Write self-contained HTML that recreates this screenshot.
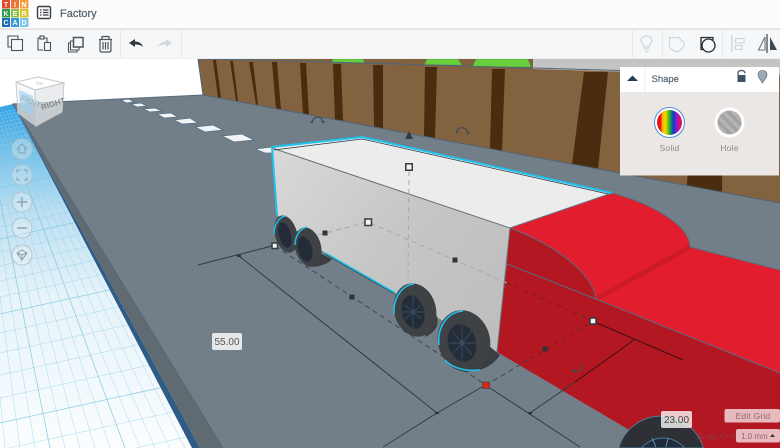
<!DOCTYPE html>
<html lang="en">
<head>
<meta charset="utf-8">
<title>Factory</title>
<style>
html,body{margin:0;padding:0;background:#fff;width:780px;height:448px;overflow:hidden}
#a{position:relative;width:780px;height:448px;overflow:hidden;font-family:"Liberation Sans",sans-serif}
svg{position:absolute;left:0;top:0;display:block;filter:blur(.3px)}
</style>
</head>
<body>
<div id="a">
<svg width="780" height="448" viewBox="0 0 780 448" xmlns="http://www.w3.org/2000/svg">
<defs>
<linearGradient id="gb" x1="0" y1="104" x2="0" y2="448" gradientUnits="userSpaceOnUse">
<stop offset="0" stop-color="#2b9fe6"/><stop offset=".12" stop-color="#6dbde9"/><stop offset=".3" stop-color="#b9def1"/><stop offset=".55" stop-color="#e6f3f9"/><stop offset="1" stop-color="#fbfdfe"/>
</linearGradient>
<clipPath id="wp"><polygon points="0,107 13,104 192,448 0,448"/></clipPath>
<linearGradient id="gs" x1="272" y1="148" x2="510" y2="340" gradientUnits="userSpaceOnUse">
<stop offset="0" stop-color="#d9d9d9"/><stop offset=".5" stop-color="#c6c6c6"/><stop offset="1" stop-color="#bdbdbd"/>
</linearGradient>
<linearGradient id="rb" x1="0" y1="0" x2="1" y2="0">
<stop offset="0" stop-color="#e8141c"/><stop offset=".17" stop-color="#e8141c"/><stop offset=".17" stop-color="#f5a100"/><stop offset=".34" stop-color="#f5d800"/><stop offset=".5" stop-color="#25b52b"/><stop offset=".66" stop-color="#0a3dc8"/><stop offset=".82" stop-color="#b510c8"/><stop offset="1" stop-color="#e8141c"/>
</linearGradient>
<pattern id="hs" width="7" height="7" patternUnits="userSpaceOnUse" patternTransform="rotate(-45)">
<rect width="7" height="7" fill="#b5b5b5"/><rect width="3.5" height="7" fill="#a2a2a2"/>
</pattern>
</defs>

<!-- workplane -->
<polygon points="0,107 13,104 200,448 0,448" fill="url(#gb)"/>
<g clip-path="url(#wp)" fill="none">
<path stroke="#8fd0ea" stroke-width=".5" opacity=".75" d="M-38 10L185 448M-38 10L170 448M-38 10L155 448M-38 10L140 448M-38 10L110 448M-38 10L95 448M-38 10L80 448M-38 10L65 448M-38 10L35 448M-38 10L20 448M-38 10L5 448M-38 10L-10 448M0 113L200 69M0 116L200 72M0 119L200 75M0 123L200 79M0 131L200 87M0 136L200 92M0 141L200 97M0 146L200 102M0 158L200 114M0 165L200 121M0 172L200 128M0 180L200 136M0 197L200 153M0 206L200 162M0 216L200 172M0 227L200 183M0 252L200 208M0 266L200 222M0 281L200 237M0 297L200 253M0 333L200 289M0 353L200 309M0 375L200 331M0 398L200 354M9 448L200 406M136 448L200 434"/>
<path stroke="#7ec6e2" stroke-width=".8" opacity=".85" d="M-38 10L125 448M-38 10L50 448M-38 10L200 448M0 127L200 83M0 152L200 108M0 188L200 144M0 239L200 195M0 314L200 270M0 423L200 379"/>
</g>
<polygon points="13,104 200,448 192,448" fill="#2f5b87"/>
<polygon points="13,104 223,448 200,448" fill="#5f6b71"/>
<polygon points="13,104 203,95 780,203 780,448 223,448" fill="#727f89"/>
<path d="M223 448L13 104L203 95" fill="none" stroke="#566a7c" stroke-width="1"/>

<!-- back wall -->
<polygon points="533,59 780,59 780,76 533,69" fill="#c4c4c4"/>
<polygon points="198,59 533,59 533,69 780,76 780,203 203,95" fill="#836240"/>
<g fill="#4a2c0e">
<polygon points="213,60 216,60 221,98 218,98"/>
<polygon points="230,61 233,61 238,101 236,101"/>
<polygon points="249,62 253,62 258,105 256,105"/>
<polygon points="272,62 277,62 281,110 276,109"/>
<polygon points="300,63 306,63 309,115 303,114"/>
<polygon points="333,64 341,64 343,121 335,120"/>
<polygon points="373,65 383,65 383,129 374,127"/>
<polygon points="425,67 437,67 435,138 424,136"/>
<polygon points="492,69 505,69 502,151 490,149"/>
<polygon points="584,72 608,72 598,169 572,164"/>
<polygon points="693,74 724,74 722,192 687,186"/>
</g>
<g fill="#68d03a" stroke="#4a8a50" stroke-width=".5">
<polygon points="333,59 363,59 365,63 331,63"/>
<polygon points="427,59 458,59 462,65 424,65"/>
<polygon points="476,59 528,59 531,67 472,67"/>
</g>
<path d="M198 59L203 95L780 203M198 59L258 60L533 68L780 75" fill="none" stroke="#4f657a" stroke-width="1"/>

<!-- road dashes -->
<g fill="#f2f4f5" stroke="#566f86" stroke-width=".8">
<polygon points="121,100 129,99 134,102 126,103"/>
<polygon points="131,104 141,103 147,106 137,107"/>
<polygon points="143,109 155,108 162,111 150,112"/>
<polygon points="157,114 171,113 178,117 164,118"/>
<polygon points="174,120 190,118 198,123 182,124"/>
<polygon points="195,127 213,125 223,130 205,132"/>
<polygon points="222,136 242,134 254,140 234,142"/>
<polygon points="255,149 272,147 280,153 265,153"/>
</g>

<!-- red cab -->
<polygon points="507,264 596,299 780,373 780,448 660,448 497,352" fill="#b31722"/>
<path d="M510 228L612 193C650 203 690 225 690 247L780 270L780 373L596 299Z" fill="#e21d2e"/>
<path d="M596 299L690 247" stroke="#c81a28" stroke-width="5" fill="none" opacity=".8"/>
<path d="M510 228C550 243 592 270 596 299L507 264Z" fill="#b31722"/>
<path d="M510 228C550 243 592 270 596 299M507 264L596 299L780 373M612 193C650 203 690 225 690 247L780 270" fill="none" stroke="#5b6e80" stroke-width="1"/>

<!-- trailer -->
<polygon points="272,148 510,228 497,352 393,292 325,253 277,215" fill="url(#gs)"/>
<polygon points="272,148 362,137 612,193 510,228" fill="#ececec"/>
<path d="M272 148L510 228L612 193M510 228L497 352" fill="none" stroke="#66727c" stroke-width="1"/>
<path d="M277 215L272 147L362 137L612 193" fill="none" stroke="#1fc3ee" stroke-width="2"/>
<path d="M274 150L362 139L608 194" fill="none" stroke="#26323c" stroke-width=".7"/>
<path d="M325 253L395 293" fill="none" stroke="#1fc3ee" stroke-width="2"/>
<path d="M325 254L395 294" fill="none" stroke="#26323c" stroke-width=".6"/>

<!-- dims & dashes -->
<g fill="none" stroke="#333a40" stroke-width="1">
<path d="M198 265L272 246M239 256L437 413M383 447L437 413L482 387M490 388L580 447"/>
</g>
<path d="M575 382L634 340M597 323L683 360" fill="none" stroke="#3a1015" stroke-width="1"/>
<path d="M530 413L575 382" fill="none" stroke="#333a40" stroke-width="1"/>
<g fill="none" stroke-width="1" stroke-dasharray="5 4">
<path d="M275 246L486 385L528 360" stroke="#3f474d"/>
<path d="M409 171L408 280M275 246L368 222L507 283" stroke="#a8a8a8"/>
<path d="M507 283L593 321L528 360" stroke="#7d1c22"/>
</g>

<!-- wheels -->
<g>
<ellipse cx="286" cy="234" rx="11" ry="19" transform="rotate(-15 286 234)" fill="#3e4245"/>
<ellipse cx="285" cy="235" rx="6" ry="13" transform="rotate(-15 285 235)" fill="#232c38"/>
<path d="M274 234C274 224 280 216 286 216" fill="none" stroke="#1fc3ee" stroke-width="1.4"/>
<path d="M314 254L322 254L332 259C326 266 314 268 306 266Z" fill="#3a3e42"/>
<ellipse cx="308" cy="247" rx="13" ry="20" transform="rotate(-15 308 247)" fill="#3e4245"/>
<ellipse cx="305" cy="249" rx="7" ry="13" transform="rotate(-15 305 249)" fill="#232c38"/>
<path d="M295 245C295 235 301 228 307 227" fill="none" stroke="#1fc3ee" stroke-width="1.4"/>

<path d="M428 318L437 316C439 325 436 332 425 337Z" fill="#3a3e42"/>
<ellipse cx="415" cy="310" rx="21" ry="27" transform="rotate(-15 415 310)" fill="#3e4245"/>
<ellipse cx="413" cy="312" rx="11" ry="17" transform="rotate(-15 413 312)" fill="#232c38"/>
<path d="M413 296L413 328M405 305L421 319M405 319L421 305M402 312L424 312" stroke="#3a4c60" stroke-width=".9"/>
<circle cx="413" cy="312" r="2" fill="#3a4c60"/>
<path d="M394 314C393 298 402 285 414 284" fill="none" stroke="#1fc3ee" stroke-width="1.6"/>

<path d="M480 345L489 346L500 355C494 364 484 371 470 371Z" fill="#3a3e42"/>
<ellipse cx="464" cy="341" rx="26" ry="31" transform="rotate(-15 464 341)" fill="#3e4245"/>
<ellipse cx="462" cy="343" rx="14" ry="19" transform="rotate(-15 462 343)" fill="#232c38"/>
<path d="M462 325L462 361M452 331L472 355M452 355L472 331M449 343L476 343" stroke="#3a4c60" stroke-width=".9"/>
<circle cx="462" cy="343" r="2.500" fill="#3a4c60"/>
<path d="M439 345C437 326 448 312 463 311M445 360C450 366 462 372 480 370" fill="none" stroke="#1fc3ee" stroke-width="1.6"/>

<path d="M618.700 448A44 44 0 0 1 703.300 448Z" fill="#2d3135" stroke="#4e7a9a" stroke-width="1"/>
<path d="M641.600 448A28 28 0 0 1 684.400 448Z" fill="#1f2b3a" stroke="#4e7a9a" stroke-width="1"/>
<path d="M652 438L656 447M668 438L666 447" stroke="#5a8cb0" stroke-width="1"/>
</g>

<!-- arcs / grabbers -->
<g fill="none" stroke="#454b52" stroke-width="1.2">
<path d="M312 122C313 116 322 115 323 122"/>
<path d="M457 132C457 126 467 126 468 133"/>
<path d="M573 371C579 373 584 369 581 364"/>
</g>
<g fill="#454b52">
<polygon points="310,121 314,121 312,124"/><polygon points="321,121 325,121 323,124"/>
<polygon points="455,131 459,131 457,134"/><polygon points="466,132 470,132 468,135"/>
<polygon points="572,369 576,370 573,373"/>
<polygon points="409,131 413,139 405,139" fill="#33393f"/>
</g>
<g fill="#2f3437">
<rect x="322.500" y="230.500" width="5" height="5"/>
<rect x="452.500" y="257.500" width="5" height="5"/>
<rect x="349.500" y="294.500" width="5" height="5"/>
<rect x="542.500" y="346.500" width="5" height="5"/>
<rect x="237" y="255" width="4" height="2"/><rect x="435" y="412" width="4" height="2"/><rect x="528" y="412" width="4" height="2"/>
</g>
<g fill="#f4f4f4" stroke="#33393f" stroke-width="1.5">
<rect x="405.750" y="163.750" width="6.500" height="6.500"/>
<rect x="365" y="219" width="6.500" height="6.500"/>
<rect x="272" y="243" width="5.500" height="5.500"/>
<rect x="590" y="318" width="6" height="6"/>
</g>
<rect x="482.500" y="382" width="7" height="6.500" fill="#e8200c" stroke="#4a4f52" stroke-width="1"/>

<!-- view cube -->
<g stroke="#c4c9cc" stroke-width="1">
<polygon points="16,82 38,77 64,83 35,90" fill="#fff" fill-opacity=".9"/>
<polygon points="16,82 35,90 36,126 18,113" fill="#f0f3f5" fill-opacity=".6"/>
<polygon points="64,83 35,90 36,126 62,112" fill="#e3e5e7" fill-opacity=".75"/>
</g>
<polygon points="19,90 33,96 33,116 20,109" fill="#9fd2ee" opacity=".7"/>
<text font-size="8" font-weight="bold" fill="#a3b4c0" transform="translate(20 100) rotate(22)">FRNT</text>
<text font-size="8" font-weight="bold" fill="#80888e" transform="translate(42 110) rotate(-17)">RIGHT</text>
<text font-size="4" fill="#b3b9bd" transform="translate(35 84) rotate(12)">TOP</text>

<!-- nav -->
<g fill="#fff" fill-opacity=".28" stroke="#b7c4ca" stroke-width="1">
<circle cx="22" cy="149" r="10"/><circle cx="22" cy="175" r="10"/><circle cx="22" cy="202" r="10"/><circle cx="22" cy="228" r="10"/><circle cx="22" cy="255" r="10"/>
</g>
<g fill="none" stroke="#8f9ba2" stroke-width="1">
<path d="M17 149L22 144L27 149M19 148V153H25V148"/>
<path d="M17 173V170H20M24 170H27V173M27 177V180H24M20 180H17V177"/>
<path d="M17 202H27M22 197V207" stroke-width="1.3"/>
<path d="M17 228H27" stroke-width="1.3"/>
<path d="M22 250L27 253L22 260L17 253ZM17 253L22 255L27 253M22 255V260"/>
</g>

<!-- header -->
<rect x="0" y="0" width="780" height="28" fill="#fcfcfc"/>
<rect x="0" y="28" width="780" height="2" fill="#e3e5e8"/>
<rect x="0" y="30" width="780" height="29" fill="#f6f7f8"/>
<rect x="0" y="58" width="780" height="1" fill="#eceef0"/>
<g font-size="7" font-weight="bold" fill="#fff" text-anchor="middle">
<rect x="2" y="0" width="8" height="8.500" fill="#e2492f"/><text x="6" y="7">T</text>
<rect x="11" y="0" width="8" height="8.500" fill="#eb7433"/><text x="15" y="7">I</text>
<rect x="20" y="0" width="8.500" height="8.500" fill="#f0a03f"/><text x="24" y="7">N</text>
<rect x="2" y="9" width="8" height="8.500" fill="#2e9a4b"/><text x="6" y="16">K</text>
<rect x="11" y="9" width="8" height="8.500" fill="#8fc03e"/><text x="15" y="16">E</text>
<rect x="20" y="9" width="8.500" height="8.500" fill="#d9c52b"/><text x="24" y="16">R</text>
<rect x="2" y="18" width="8" height="9" fill="#1c6cb5"/><text x="6" y="25">C</text>
<rect x="11" y="18" width="8" height="9" fill="#3b98d6"/><text x="15" y="25">A</text>
<rect x="20" y="18" width="8.500" height="9" fill="#7cc4ee"/><text x="24" y="25">D</text>
</g>
<rect x="37.500" y="6.500" width="13" height="12" rx="1.500" fill="none" stroke="#3b4046" stroke-width="1.4"/>
<path d="M40 10H41.500M43 10H48.500M40 12.500H41.500M43 12.500H48.500M40 15H41.500M43 15H48.500" stroke="#3b4046" stroke-width="1.2"/>
<text x="60" y="17" font-size="11" fill="#56656f" stroke="#56656f" stroke-width=".25">Factory</text>

<!-- toolbar separators -->
<path d="M120.500 30V58M181.500 30V58M632.500 30V58M662.500 30V58M722.500 30V58" stroke="#e6e8ea"/>

<!-- toolbar left -->
<g fill="none" stroke="#4a545c" stroke-width="1.1">
<path d="M11 47H8V36H18V39"/><rect x="11.500" y="39.500" width="11" height="11"/>
<path d="M44 38H47V42M43 50H38V38H40"/><rect x="40" y="36" width="4" height="3"/><rect x="44.500" y="42.500" width="6" height="8"/>
<rect x="73.500" y="37.500" width="9.500" height="9.500" stroke-width="1.5"/>
<path d="M73 41H70.500V50H79V47M70 43H68.500V52H77V50"/>
<path d="M99 39.500H112M102 39V36.500H109V39M100 40V50.500C100 51.500 101 52 102 52H109C110 52 111 51.500 111 50.500V40M103 42V49.500M105.500 42V49.500M108 42V49.500" stroke-width="1.2"/>
</g>
<path d="M129 43L135 39V41.500C139 41.500 142 43.500 143 47C141 45 138.500 44.500 135 44.500V47Z" fill="#2c3842"/>
<path d="M172 43L166 39V41.500C162 41.500 159 43.500 158 47C160 45 162.500 44.500 166 44.500V47Z" fill="#d0d9df"/>

<!-- toolbar right -->
<g fill="none" stroke="#d0d7db" stroke-width="1.2">
<path d="M644 47C644 44 641 43 641 40.500C641 37.500 643.500 36 646.500 36C649.500 36 652 37.500 652 40.500C652 43 649 44 649 47ZM644 49H649M645 51.500H648"/>
<path d="M669.500 37.500H679.500C680 40 682 41 683.500 41.500C685.500 46 681 52 676 51.500C673 51.500 670.500 48.500 669.500 46.500Z"/>
<path d="M732 35V52" stroke-width="1.4"/><rect x="735.500" y="38.500" width="8.500" height="4.500"/><rect x="735.500" y="45.500" width="6.500" height="4"/>
</g>
<g fill="none" stroke="#262b2f" stroke-width="1.3">
<path d="M704 49.500H701V37.500H713V40"/><circle cx="708.500" cy="45.500" r="6.500"/>
</g>
<path d="M767 34V53" stroke="#3a4147" stroke-width="1.2"/>
<path d="M765 37V50H758.500Z" fill="none" stroke="#6c7880" stroke-width="1.1"/>
<path d="M770 37V50H777Z" fill="#3a4850"/>

<!-- shape panel -->
<rect x="620" y="67" width="159" height="25" fill="#fff"/>
<rect x="620" y="92" width="159" height="83.500" fill="#ebe7e4"/>
<path d="M645 67V92" stroke="#eeeeee"/>
<path d="M627 81L632.500 75.500L638 81Z" fill="#263e54"/>
<text x="651.500" y="82" font-size="9.500" fill="#56656f" stroke="#56656f" stroke-width=".2">Shape</text>
<path d="M738 75.500V73.500C738 71.500 739.500 70.500 741.500 70.500C743.500 70.500 745 71.500 745 73.500" fill="none" stroke="#3d5267" stroke-width="1.2"/>
<rect x="737.500" y="75" width="8" height="7" fill="#3d5267"/>
<path d="M762.500 83L758.500 77C757 73 759 70.500 762.500 70.500C766 70.500 768 73 766.500 77Z" fill="#9ba9b4" stroke="#4b5d6c" stroke-width=".6"/>
<circle cx="669.500" cy="122.500" r="15" fill="#fff" stroke="#4f8ee0" stroke-width="1"/>
<circle cx="669.500" cy="122.500" r="12.500" fill="url(#rb)"/>
<circle cx="729.500" cy="122.500" r="13.500" fill="url(#hs)" stroke="#fff" stroke-width="3"/>
<text x="669.500" y="151" font-size="8.500" fill="#8a8a8a" text-anchor="middle" letter-spacing=".2">Solid</text>
<text x="729.500" y="151" font-size="8.500" fill="#8a8a8a" text-anchor="middle" letter-spacing=".2">Hole</text>

<!-- labels -->
<rect x="212" y="333" width="30" height="17" rx="2" fill="#e6e7e8"/>
<text x="227" y="345" font-size="10" fill="#555" text-anchor="middle">55.00</text>
<rect x="661" y="411" width="31" height="17" rx="2" fill="#fff" fill-opacity=".78"/>
<text x="676.500" y="423" font-size="10" fill="#444" text-anchor="middle">23.00</text>
<rect x="724.500" y="409" width="55.500" height="13.500" rx="2" fill="#fff" fill-opacity=".7"/>
<text x="753" y="419" font-size="8.500" fill="#8b6b72" text-anchor="middle" letter-spacing=".2">Edit Grid</text>
<text x="697" y="439" font-size="8.500" fill="#8d3a44" letter-spacing=".1">Snap Grid</text>
<rect x="736" y="429" width="44" height="13.500" rx="2" fill="#fff" fill-opacity=".7"/>
<text x="741" y="439" font-size="8" fill="#8b6b72">1.0 mm</text>
<path d="M770 437L772.500 434L775 437Z" fill="#333"/>
</svg>
</div>
</body>
</html>
